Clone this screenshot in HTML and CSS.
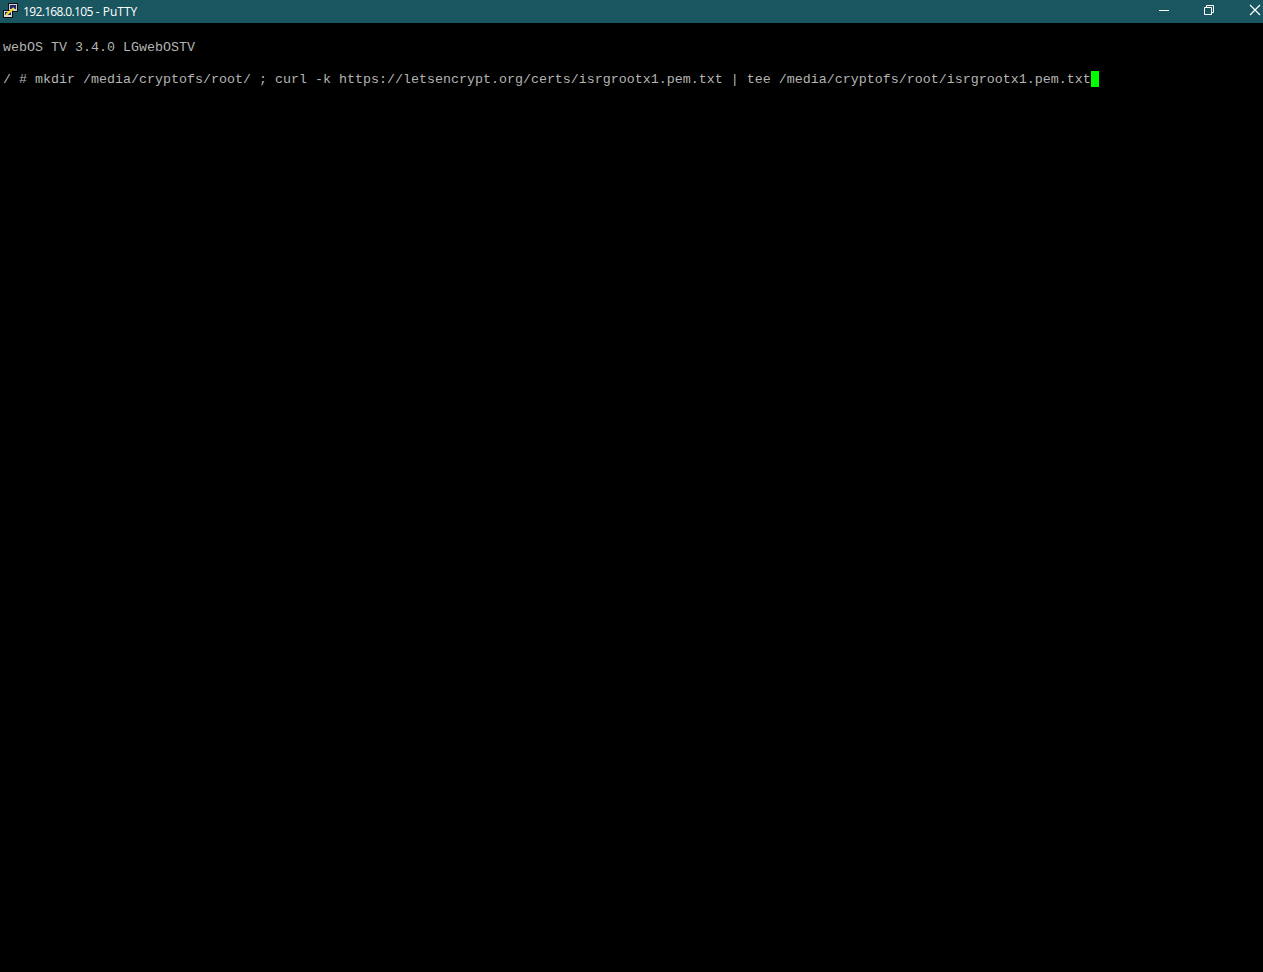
FILE: index.html
```html
<!DOCTYPE html>
<html lang="en">
<head>
<meta charset="utf-8">
<title>192.168.0.105 - PuTTY</title>
<link rel="stylesheet" href="styles.css">
</head>
<body>
<div class="window">
  <header class="titlebar">
    <svg class="app-icon" width="18" height="23" viewBox="0 0 18 23" aria-hidden="true">
      <rect x="7.5" y="3.5" width="9" height="8" fill="#cfcfcf" stroke="#0c0c0c"/>
      <rect x="9" y="5" width="6" height="4" fill="#25256f"/>
      <rect x="2.5" y="10.5" width="9" height="7" fill="#d8d8d8" stroke="#0c0c0c"/>
      <rect x="4" y="12" width="6" height="3" fill="#20206a"/>
      <path d="M5 15 L13 8" stroke="#f2de2a" stroke-width="2.2"/>
    </svg>
    <span class="title"><span class="host">192.168.0.105</span> - PuTTY</span>
    <div class="controls">
      <svg class="control" width="46" height="23" viewBox="0 0 46 23" aria-hidden="true"><path d="M12 10.5H22" stroke="#fff" fill="none"/></svg>
      <svg class="control" width="46" height="23" viewBox="0 0 46 23" aria-hidden="true"><path d="M13.5 7.5V5.5H20.5V12.5H19M11.5 7.5H18.5V14.5H11.5Z" stroke="#fff" fill="none"/></svg>
      <svg class="control" width="24" height="23" viewBox="0 0 24 23" aria-hidden="true"><path d="M11 5L21 15M21 5L11 15" stroke="#fff" stroke-width="1.2" fill="none"/></svg>
    </div>
  </header>
  <main class="terminal">
    <div class="line"></div>
    <div class="line">webOS TV 3.4.0 LGwebOSTV</div>
    <div class="line"></div>
    <div class="line">/ # mkdir /media/cryptofs/root/ ; curl -k https://letsencrypt.org/certs/isrgrootx1.pem.txt | tee /media/cryptofs/root/isrgrootx1.pem.txt<span class="cursor"></span></div>
  </main>
</div>
</body>
</html>
```
FILE: styles.css
```css
html, body {
  margin: 0;
  padding: 0;
  height: 100%;
  background: #000;
  overflow: hidden;
}

.window {
  display: flex;
  flex-direction: column;
  height: 972px;
}

.titlebar {
  display: flex;
  align-items: center;
  height: 23px;
  flex: none;
  background: #1a5660;
  color: #fff;
  font-family: "Open Sans", "Liberation Sans", sans-serif;
  font-size: 12px;
  box-sizing: border-box;
  padding-left: 1px;
}

.app-icon {
  display: block;
  flex: none;
  margin-right: 4px;
}

.title {
  flex: 1;
  white-space: pre;
}

.host {
  letter-spacing: -0.65px;
}

.controls {
  display: flex;
  align-items: center;
}

.control {
  display: block;
  flex: none;
}

.terminal {
  flex: 1;
  background: #000;
  color: #b4b4b4;
  font-family: "Liberation Mono", monospace;
  font-size: 13.333px;
  line-height: 16px;
  padding-left: 3px;
}

.line {
  display: flex;
  height: 16px;
  line-height: 18px;
  white-space: pre;
}

.cursor {
  display: block;
  flex: none;
  width: 8px;
  height: 16px;
  background: #0f0;
}
```
